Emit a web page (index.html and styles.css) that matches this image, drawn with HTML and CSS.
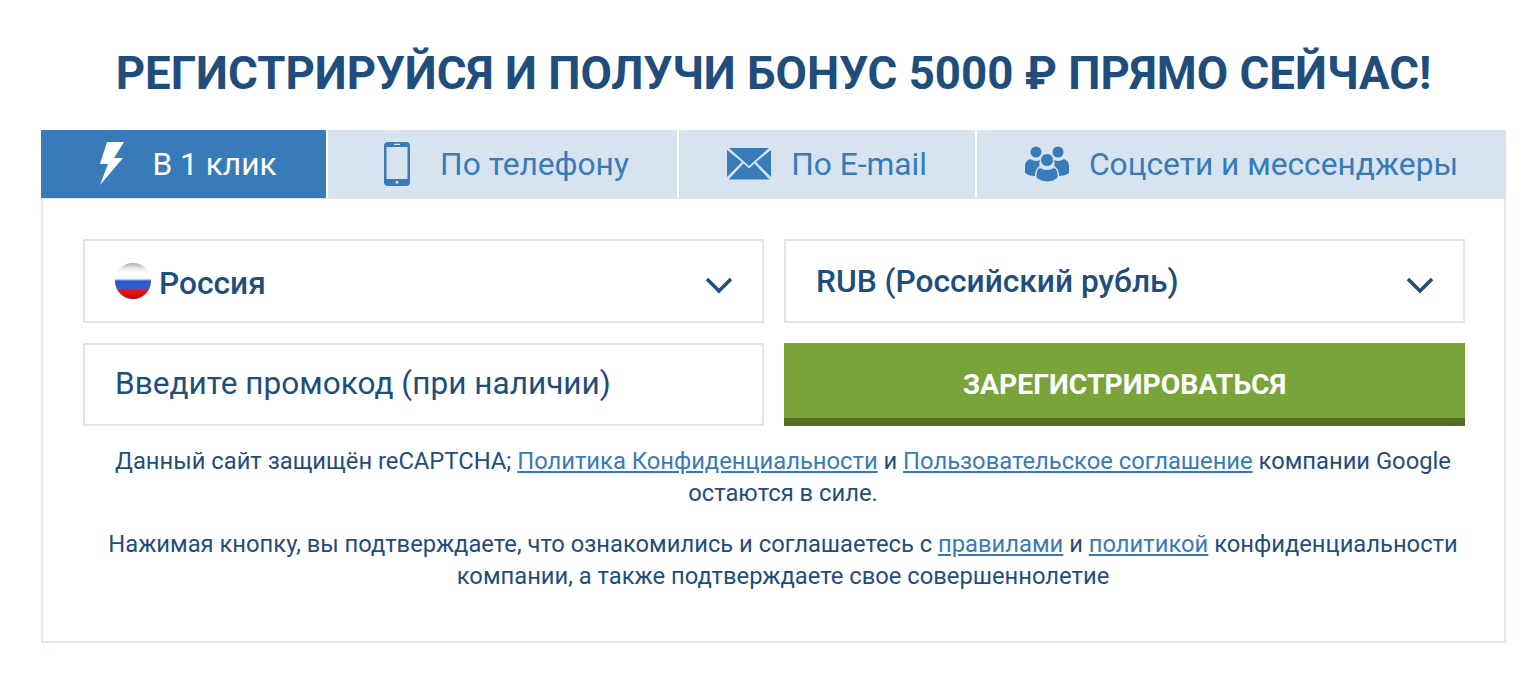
FILE: index.html
```html
<!DOCTYPE html>
<html lang="ru">
<head>
    <meta charset="UTF-8">
    <title>Регистрация</title>
    <link rel="stylesheet" href="styles.css">
</head>
<body>
    <div class="container">
        <h1 class="title">РЕГИСТРИРУЙСЯ И ПОЛУЧИ БОНУС 5000 ₽ ПРЯМО СЕЙЧАС!</h1>

        <div class="tabs">
            <div class="tab tab-click active">
                <svg class="icon-bolt" viewBox="0 0 25 44"><path d="M7 0H24L14 16H23L0 43L8 22H0Z" fill="#fff"/></svg>
                <span>В 1 клик</span>
            </div>
            <div class="tab tab-phone">
                <svg class="icon-phone" viewBox="0 0 26 44">
                    <path fill-rule="evenodd" fill="#377bb9" d="M4 0H22Q26 0 26 4V40Q26 44 22 44H4Q0 44 0 40V4Q0 0 4 0ZM2.500 5V37H23.500V5ZM10 1.800V3H16V1.800ZM13 38.800A1.500 1.500 0 1 0 13 41.800A1.500 1.500 0 1 0 13 38.800Z"/>
                </svg>
                <span>По телефону</span>
            </div>
            <div class="tab tab-mail">
                <svg class="icon-mail" viewBox="0 0 44 32">
                    <path fill="#377bb9" d="M2 0H42L22 18ZM0 2V29L15 14ZM44 2V29L29 14ZM1.500 31.500L16.500 15.500L22 20.500L27.500 15.500L42.500 31.500Z"/>
                </svg>
                <span>По E-mail</span>
            </div>
            <div class="tab tab-social">
                <svg class="icon-users" viewBox="0 0 44 36">
                    <g fill="#377bb9">
                        <circle cx="11" cy="6" r="5.500"/>
                        <circle cx="33" cy="6" r="5.500"/>
                        <path d="M5 13Q8 15 11 15Q13 15 15 14Q14 17 14.500 20Q10 23 10 30Q4 30 0 27V20Q0 15 5 13Z"/>
                        <path d="M39 13Q36 15 33 15Q31 15 29 14Q30 17 29.500 20Q34 23 34 30Q40 30 44 27V20Q44 15 39 13Z"/>
                    </g>
                    <circle cx="22" cy="14" r="6.500" fill="#377bb9" stroke="#d7e4ef" stroke-width="1"/>
                    <path d="M15 21.500Q18 23.500 22 23.500Q26 23.500 29 21.500Q33 23 33 29V32Q28 36 22 36Q16 36 11 32V29Q11 23 15 21.500Z" fill="#377bb9" stroke="#d7e4ef" stroke-width="1"/>
                </svg>
                <span>Соцсети и мессенджеры</span>
            </div>
        </div>

        <div class="panel">
            <div class="form-grid">
                <div class="field select">
                    <span class="flag"></span>
                    <span class="field-value country">Россия</span>
                    <svg class="chevron" viewBox="0 0 28 18"><path d="M2 3L14 15L26 3" fill="none" stroke="#1f4e7d" stroke-width="3.500"/></svg>
                </div>
                <div class="field select">
                    <span class="field-value">RUB (Российский рубль)</span>
                    <svg class="chevron" viewBox="0 0 28 18"><path d="M2 3L14 15L26 3" fill="none" stroke="#1f4e7d" stroke-width="3.500"/></svg>
                </div>
                <div class="field">
                    <span class="placeholder">Введите промокод (при наличии)</span>
                </div>
                <div class="submit">ЗАРЕГИСТРИРОВАТЬСЯ</div>
            </div>

            <p class="note">Данный сайт защищён reCAPTCHA; <a href="#">Политика Конфиденциальности</a> и <a href="#">Пользовательское соглашение</a> компании Google<br>остаются в силе.</p>
            <p class="note">Нажимая кнопку, вы подтверждаете, что ознакомились и соглашаетесь с <a href="#">правилами</a> и <a href="#">политикой</a> конфиденциальности<br>компании, а также подтверждаете свое совершеннолетие</p>
        </div>
    </div>
</body>
</html>
```

FILE: styles.css
```css
body {
    font-family: Roboto, "Liberation Sans", sans-serif;
    background: #fff;
    color: #1f4e7d;
    margin: 0;
    padding: 0;
}
.container {
    margin: 0 30px 0 41px;
    padding-top: 44px;
}
.title {
    margin: 0 0 26px;
    font-size: 45.6px;
    line-height: 60px;
    font-weight: 700;
    text-align: center;
    color: #1f4e7d;
    white-space: nowrap;
}
.tabs {
    display: flex;
    height: 69px;
    background: #d7e4ef;
    font-size: 31.7px;
    color: #377bb9;
}
.tab {
    display: flex;
    align-items: center;
    justify-content: center;
    height: 68px;
    box-sizing: border-box;
    border-right: 2px solid #fff;
}
.tab-click {
    width: 287px;
    gap: 27px;
    padding-left: 10px;
}
.tab-phone {
    width: 351px;
    gap: 30px;
    padding-left: 8px;
}
.tab-mail {
    width: 298px;
    gap: 20px;
}
.tab-social {
    flex: 1;
    gap: 20px;
    border-right: 0;
}
.tab.active {
    background: #377bb9;
    color: #fff;
}
.icon-bolt {
    width: 25px;
    height: 44px;
}
.icon-phone {
    width: 26px;
    height: 44px;
}
.icon-mail {
    width: 44px;
    height: 32px;
}
.icon-users {
    width: 44px;
    height: 36px;
}
.panel {
    box-sizing: border-box;
    height: 444px;
    padding: 40px 39px 0 40px;
    border: 2px solid #e1eaf2;
    border-top: 0;
}
.form-grid {
    display: grid;
    grid-template-columns: 1fr 1fr;
    grid-template-rows: 84px 83px;
    gap: 20px;
    margin-bottom: 19px;
}
.field {
    display: flex;
    align-items: center;
    box-sizing: border-box;
    padding: 0 29px 0 30px;
    border: 2px solid #dfe5e9;
    background: #fff;
}
.field-value {
    font-size: 31.7px;
    font-weight: 500;
    color: #1f4e7d;
}
.country {
    margin-top: 5px;
}
.placeholder {
    font-size: 31.6px;
    margin-bottom: 2px;
    color: #1f4e7d;
}
.flag {
    width: 36px;
    height: 36px;
    margin-right: 8px;
    border-radius: 50%;
    background: linear-gradient(#a9a9a9 0%, #e8e8e8 14%, #ffffff 28%, #f6f8fc 44%, #2b57c8 50%, #2f5fd0 70%, #f01414 76%, #d41010 90%, #a81010 100%);
}
.chevron {
    width: 28px;
    height: 18px;
    margin-left: auto;
    margin-top: 7px;
}
.submit {
    display: flex;
    align-items: center;
    justify-content: center;
    padding-top: 8px;
    box-sizing: border-box;
    background: #79a43a;
    border-bottom: 8px solid #536f25;
    color: #fff;
    font-size: 28.3px;
    font-weight: 700;
}
.note {
    margin: 0 0 19px;
    padding-left: 18px;
    font-size: 23.75px;
    line-height: 32px;
    text-align: center;
    color: #1f4e7d;
}
.note a {
    color: #377bb9;
}
```
